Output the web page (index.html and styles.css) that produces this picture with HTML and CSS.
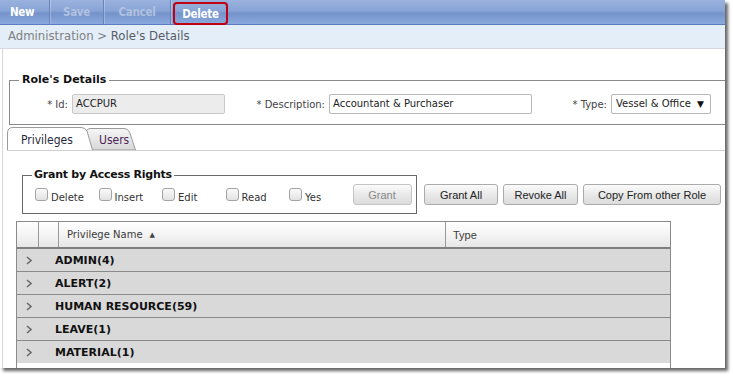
FILE: index.html
```html
<!DOCTYPE html>
<html>
<head>
<meta charset="utf-8">
<title>Role's Details</title>
<link rel="stylesheet" href="styles.css">
</head>
<body>
<div class="window">
  <div class="toolbar">
    <span class="tb-btn tb-new">New</span>
    <span class="tb-btn tb-disabled tb-save">Save</span>
    <span class="tb-btn tb-disabled tb-cancel">Cancel</span>
    <span class="tb-delete">Delete</span>
  </div>
  <div class="crumb"><span class="crumb-root">Administration &gt; </span><span class="crumb-cur">Role's Details</span></div>
  <div class="content">
    <fieldset class="role-fs">
      <legend>Role's Details</legend>
      <div class="fields">
        <span class="lbl lbl-id">* Id:</span>
        <span class="inp inp-id">ACCPUR</span>
        <span class="lbl lbl-desc">* Description:</span>
        <span class="inp inp-desc">Accountant &amp; Purchaser</span>
        <span class="lbl lbl-type">* Type:</span>
        <span class="inp sel">Vessel &amp; Office<span class="caret">&#9660;</span></span>
      </div>
    </fieldset>

    <div class="tabs">
      <div class="tab tab-active">
        <svg class="tab-shape" width="86" height="23" viewBox="0 0 86 23"><path d="M0.5,23 V6 Q0.5,0.5 6,0.5 H74 Q78.5,0.5 80,4 L85.5,23" fill="#fff" stroke="#9a9a9a"/></svg>
        <span class="tab-text">Privileges</span>
      </div>
      <div class="tab tab-users">
        <svg class="tab-shape" width="52" height="23" viewBox="0 0 52 23"><defs><linearGradient id="ug" x1="0" y1="0" x2="0" y2="1"><stop offset="0" stop-color="#f6f6f6"/><stop offset="1" stop-color="#d8d8d8"/></linearGradient></defs><path d="M2,23 V6 Q2,1.5 7,1.5 H40 Q44,1.5 45.5,5 L51.5,23 Z" fill="url(#ug)" stroke="#9a9a9a"/></svg>
        <span class="tab-text">Users</span>
      </div>
    </div>

    <div class="panel">
      <div class="grant-row">
        <fieldset class="grant-fs">
          <legend>Grant by Access Rights</legend>
          <div class="checks">
            <span class="chk"><span class="box"></span><span class="chk-lbl">Delete</span></span>
            <span class="chk"><span class="box"></span><span class="chk-lbl">Insert</span></span>
            <span class="chk"><span class="box"></span><span class="chk-lbl">Edit</span></span>
            <span class="chk"><span class="box"></span><span class="chk-lbl">Read</span></span>
            <span class="chk"><span class="box"></span><span class="chk-lbl">Yes</span></span>
            <span class="btn btn-grant">Grant</span>
          </div>
        </fieldset>
        <div class="actions">
          <span class="btn btn-all">Grant All</span>
          <span class="btn btn-revoke">Revoke All</span>
          <span class="btn btn-copy">Copy From other Role</span>
        </div>
      </div>

      <div class="grid">
        <div class="grid-head">
          <span class="hc hc1"></span>
          <span class="hc hc2"></span>
          <span class="hc hc3">Privilege Name <span class="sort">&#9650;</span></span>
          <span class="hc hc4">Type</span>
        </div>
        <div class="grow"><svg class="chev" width="7" height="9" viewBox="0 0 7 9"><path d="M1,1 L5,4.5 L1,8" fill="none" stroke="#6a6a6a" stroke-width="1.6"/></svg><span class="gname">ADMIN(4)</span></div>
        <div class="grow"><svg class="chev" width="7" height="9" viewBox="0 0 7 9"><path d="M1,1 L5,4.5 L1,8" fill="none" stroke="#6a6a6a" stroke-width="1.6"/></svg><span class="gname">ALERT(2)</span></div>
        <div class="grow"><svg class="chev" width="7" height="9" viewBox="0 0 7 9"><path d="M1,1 L5,4.5 L1,8" fill="none" stroke="#6a6a6a" stroke-width="1.6"/></svg><span class="gname">HUMAN RESOURCE(59)</span></div>
        <div class="grow"><svg class="chev" width="7" height="9" viewBox="0 0 7 9"><path d="M1,1 L5,4.5 L1,8" fill="none" stroke="#6a6a6a" stroke-width="1.6"/></svg><span class="gname">LEAVE(1)</span></div>
        <div class="grow grow-last"><svg class="chev" width="7" height="9" viewBox="0 0 7 9"><path d="M1,1 L5,4.5 L1,8" fill="none" stroke="#6a6a6a" stroke-width="1.6"/></svg><span class="gname">MATERIAL(1)</span></div>
      </div>
    </div>
  </div>
</div>
</body>
</html>
```

FILE: styles.css
```css
* { box-sizing: border-box; }
html, body { margin: 0; padding: 0; background: #fff; }
body {
  width: 733px;
  height: 376px;
  overflow: hidden;
  font-family: "DejaVu Sans", Verdana, sans-serif;
  font-size: 10px;
  color: #333;
}
.window {
  width: 725px;
  height: 368px;
  background: #fff;
  box-shadow: 3px 3px 3px rgba(0, 0, 0, 0.6);
  overflow: hidden;
  display: flex;
  flex-direction: column;
}

/* toolbar */
.toolbar {
  flex: none;
  height: 25px;
  display: flex;
  align-items: stretch;
  background: linear-gradient(#9ab2de 0%, #88a4d6 45%, #7592ca 55%, #8aaade 100%);
  border-bottom: 1px solid #5b7cbf;
  font-family: "DejaVu Sans Condensed", "DejaVu Sans", sans-serif;
  font-weight: bold;
  font-size: 11.5px;
  letter-spacing: -0.3px;
}
.tb-btn {
  display: flex;
  align-items: center;
  justify-content: center;
  flex: none;
  color: #fff;
  border-right: 1px solid #6784bd;
  box-shadow: 1px 0 0 rgba(255, 255, 255, 0.25);
}
.tb-new { width: 50px; justify-content: flex-start; padding-left: 10px; }
.tb-save { width: 54px; }
.tb-cancel { width: 67px; }
.tb-disabled { color: #b1c2e0; }
.tb-delete {
  align-self: flex-start;
  flex: none;
  margin: 2px 0 0 2px;
  width: 55px;
  height: 23px;
  display: flex;
  align-items: center;
  justify-content: center;
  color: #fff;
  border: 2px solid #c00010;
  border-radius: 4px;
}

/* breadcrumb */
.crumb {
  flex: none;
  height: 24px;
  background: #e4eef9;
  border-bottom: 1px solid #d4d8de;
  padding-left: 8px;
  font-family: "DejaVu Sans Condensed", "DejaVu Sans", sans-serif;
  font-size: 13px;
  line-height: 21px;
}
.crumb-root { color: #808080; }
.crumb-cur { color: #555c66; }

/* content */
.content {
  flex: 1;
  margin-left: 2px;
  border-left: 1px solid #d6d6d6;
  display: flex;
  flex-direction: column;
  min-height: 0;
}

fieldset {
  margin: 0;
  min-width: 0;
}
legend {
  font-weight: bold;
  font-size: 11px;
  line-height: 14px;
  color: #111;
  padding: 0 3px;
}

.role-fs {
  margin: 24px -20px 0 6px;
  border: 1px solid #8a8a8a;
  padding: 7px 0 10px 8px;
}
.role-fs legend { margin-left: 1px; }

.fields {
  display: flex;
  align-items: center;
  height: 20px;
  margin-left: -8px;
}
.lbl {
  text-align: right;
  color: #444;
  padding-right: 4px;
  flex: none;
}
.lbl-id { width: 62px; }
.lbl-desc { width: 104px; }
.lbl-type { width: 79px; }
.inp {
  flex: none;
  height: 20px;
  border: 1px solid #b8b8b8;
  border-radius: 2px;
  padding-left: 3px;
  line-height: 18px;
  color: #222;
  background: #fff;
}
.inp-id { width: 153px; background: #ececec; border-color: #c8c8c8; }
.inp-desc { width: 203px; }
.sel {
  width: 100px;
  padding-left: 4px;
  display: flex;
  align-items: center;
  justify-content: space-between;
  padding-right: 6px;
}
.caret { font-size: 9px; color: #111; }

/* tabs */
.tabs {
  flex: none;
  margin: 2px -20px 0 4px;
  height: 24px;
  display: flex;
  border-bottom: 1px solid #cfcfcf;
  font-family: "DejaVu Sans Condensed", "DejaVu Sans", sans-serif;
  font-size: 12px;
}
.tab {
  position: relative;
  height: 23px;
  display: flex;
  align-items: center;
  padding-top: 3px;
}
.tab-shape { position: absolute; left: 0; top: 0; }
.tab-text { position: relative; }
.tab-active { width: 86px; padding-left: 14px; z-index: 2; color: #2a2a3a; }
.tab-users { width: 52px; margin-left: -9px; padding-left: 15px; z-index: 1; color: #4a2656; }

/* panel */
.panel {
  flex: 1;
  display: flex;
  flex-direction: column;
  min-height: 0;
}
.grant-row {
  display: flex;
  align-items: flex-start;
  margin: 17px 0 0 19px;
}
.grant-fs {
  width: 395px;
  border: 1px solid #6a6a6a;
  padding: 2px 6px 8px 12px;
}
.grant-fs legend { margin-left: -3px; padding: 0 2px; letter-spacing: -0.25px; }
.checks {
  display: flex;
  align-items: flex-start;
  height: 21px;
}
.chk {
  width: 63.5px;
  display: flex;
  align-items: flex-start;
  flex: none;
}
.box {
  width: 13px;
  height: 13px;
  margin-top: 4px;
  border: 1px solid #a4a4a4;
  border-radius: 3px;
  background: linear-gradient(#fafafa, #e2e2e2);
  flex: none;
}
.chk-lbl {
  margin-left: 3px;
  padding-top: 7px;
  line-height: 13px;
  color: #333;
}

.btn {
  display: flex;
  align-items: center;
  justify-content: center;
  height: 21px;
  border: 1px solid #ababab;
  border-radius: 3px;
  background: linear-gradient(#fbfbfb, #e9e9e9 50%, #dcdcdc);
  font-family: "Liberation Sans", Arial, sans-serif;
  font-size: 11px;
  color: #222;
  flex: none;
}
.btn-grant { width: 59px; margin-left: auto; color: #8a8a8a; border-color: #c4c4c4; }
.actions {
  display: flex;
  margin: 16px 0 0 7px;
}
.btn-all { width: 74px; }
.btn-revoke { width: 75px; margin-left: 5px; }
.btn-copy { width: 138px; margin-left: 5px; }

/* grid */
.grid {
  flex: 1;
  width: 655px;
  margin: 7px 0 0 13px;
  border-left: 1px solid #8a8a8a;
  border-right: 1px solid #8a8a8a;
  border-top: 1px solid #8a8a8a;
}
.grid-head {
  display: flex;
  height: 27px;
  border-bottom: 2px solid #7f7f7f;
  background: linear-gradient(#ffffff, #f4f4f4 50%, #e6e6e6);
}
.hc {
  height: 25px;
  border-right: 1px solid #999;
  display: flex;
  align-items: center;
  flex: none;
  color: #3a3a3a;
}
.hc1 { width: 22px; }
.hc2 { width: 20px; }
.hc3 { width: 387px; padding-left: 8px; }
.hc4 { width: 224px; border-right: 0; padding-left: 7px; font-family: "Liberation Sans", Arial, sans-serif; font-size: 11px; }
.sort { font-size: 7px; margin-left: 7px; color: #444; }

.grow {
  height: 23px;
  background: #d9d9d9;
  border-bottom: 1px solid #8a8a8a;
  display: flex;
  align-items: center;
}
.grow-last { border-bottom: 0; height: 22px; }
.chev { margin-left: 9px; flex: none; }
.gname {
  margin-left: 22px;
  font-weight: bold;
  font-size: 11px;
  color: #111;
}
```
